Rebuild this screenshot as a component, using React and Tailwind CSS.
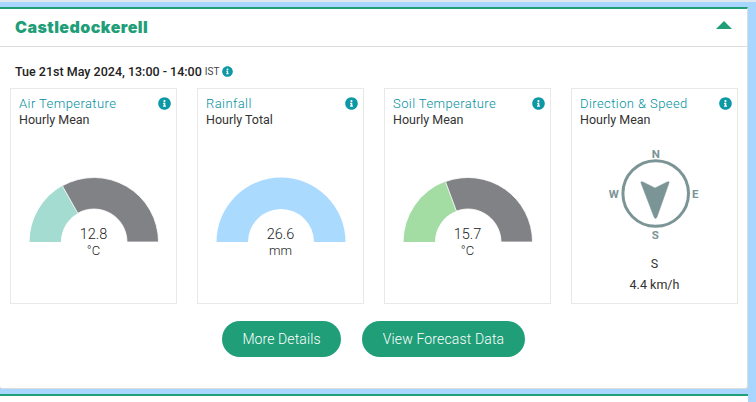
import React from 'react';
import { FaInfoCircle } from 'react-icons/fa';

const stations = [
    { title: 'Air Temperature', sub: 'Hourly Mean', value: '12.8', unit: '°C', angle: 60.6, fill: '#a5dcd2' },
    { title: 'Rainfall', sub: 'Hourly Total', value: '26.6', unit: 'mm', angle: 180, fill: '#abdaff' },
    { title: 'Soil Temperature', sub: 'Hourly Mean', value: '15.7', unit: '°C', angle: 69.5, fill: '#a3dda3' },
];

const Gauge = ({ value, unit, angle, fill }) => {
    const cx = 70;
    const cy = 68;
    const outer = 64.5;
    const inner = 33;
    const rad = (angle * Math.PI) / 180;
    const ox = cx - outer * Math.cos(rad);
    const oy = cy - outer * Math.sin(rad);
    const ix = cx - inner * Math.cos(rad);
    const iy = cy - inner * Math.sin(rad);
    const colored = `M${cx - outer} ${cy} A${outer} ${outer} 0 0 1 ${ox} ${oy} L${ix} ${iy} A${inner} ${inner} 0 0 0 ${cx - inner} ${cy} Z`;
    const rest = `M${ox} ${oy} A${outer} ${outer} 0 0 1 ${cx + outer} ${cy} L${cx + inner} ${cy} A${inner} ${inner} 0 0 0 ${ix} ${iy} Z`;

    return (
        <div className="relative w-[140px] h-[100px] mx-auto mt-[46px]">
            <svg width="140" height="68" viewBox="0 0 140 68">
                <path d={colored} fill={fill} />
                {angle < 180 && <path d={rest} fill="#818285" stroke="#ffffff" strokeWidth="0.8" />}
            </svg>
            <div className="absolute left-0 right-0 top-[52px] text-center font-light text-[#222222]">
                <div className="text-[14.5px] leading-[17px]">{value}</div>
                <div className="text-[13px] leading-[15px]">{unit}</div>
            </div>
        </div>
    );
};

const Compass = () => (
    <svg width="100" height="110" viewBox="0 0 100 110" className="mx-auto mt-[11px]">
        <circle cx="50.7" cy="54.5" r="32.8" fill="none" stroke="#7b9496" strokeWidth="3" />
        <path
            d="M36 44 Q35 42 38 43 L50 49 L62 43 Q65 42 64 44 L52 78 Q50.5 81 49 78 Z"
            fill="#7b9496"
            stroke="#7b9496"
            strokeWidth="0.5"
            strokeLinejoin="round"
        />
        <g fill="#7b9496" fontSize="11.5" fontWeight="700" textAnchor="middle" fontFamily="Roboto, sans-serif">
            <text x="50.7" y="18.5">N</text>
            <text x="90.2" y="58.5">E</text>
            <text x="50.2" y="99.5">S</text>
            <text x="8.9" y="58.5">W</text>
        </g>
    </svg>
);

const PanelHead = ({ title, sub }) => (
    <div className="flex justify-between">
        <div>
            <div className="text-[13px] leading-[16px] tracking-[0.42px] font-light text-[#00909e]">{title}</div>
            <div className="text-[12.5px] leading-[16px] text-[#333333]">{sub}</div>
        </div>
        <FaInfoCircle className="text-[13px] text-[#0d98a6] mr-[-3px] mt-[1px]" />
    </div>
);

const App = () => {
    return (
        <div className="w-[756px] h-[402px] overflow-hidden bg-[#a9d6fe] font-['Roboto',sans-serif]">
            <div className="h-[2px] bg-[#dfe8ef]"></div>
            <div className="w-[748px] mt-[5px] h-[382px] bg-white border-t-2 border-t-[#1f9e78] border-r border-b border-r-[#dddddd] border-b-[#dddddd] rounded-b-[3px]">
                <div className="h-[38px] flex items-center justify-between pl-[15px] pr-[15px] border-b border-[#dddddd]">
                    <h2 className="font-['Inter',sans-serif] text-[16px] leading-[20px] mt-[-2px] font-black tracking-[0.45px] text-[#1f9e78]">Castledockerell</h2>
                    <svg width="16" height="8" viewBox="0 0 16 8" className="mt-[-6px]">
                        <polygon points="8,0 16,8 0,8" fill="#1f9e78" />
                    </svg>
                </div>

                <div className="pl-[15px] pt-[16px] h-[41px] text-[12.5px] leading-[16px] font-medium text-[#222222] flex items-center gap-[3px] pb-[8px]">
                    <span>Tue 21st May 2024, 13:00 - 14:00</span>
                    <span className="text-[10px] font-normal text-[#444444]">IST</span>
                    <FaInfoCircle className="text-[11px] text-[#0d98a6]" />
                </div>

                <div className="flex gap-[20px] pl-[10px]">
                    {stations.map((s) => (
                        <div key={s.title} className="w-[167px] h-[216px] border border-[#e8e8e8] pt-[7px] px-[8px]">
                            <PanelHead title={s.title} sub={s.sub} />
                            <Gauge value={s.value} unit={s.unit} angle={s.angle} fill={s.fill} />
                        </div>
                    ))}
                    <div className="w-[167px] h-[216px] border border-[#e8e8e8] pt-[7px] px-[8px]">
                        <PanelHead title="Direction & Speed" sub="Hourly Mean" />
                        <Compass />
                        <div className="text-center text-[12.5px] leading-[21px] text-[#333333] mt-[4px]">
                            <div>S</div>
                            <div>4.4 km/h</div>
                        </div>
                    </div>
                </div>

                <div className="flex gap-[21px] mt-[17px] pl-[222px]">
                    <button className="w-[119px] h-[36px] rounded-full bg-[#1f9e78] text-white text-[14px] font-light tracking-[0.1px]">More Details</button>
                    <button className="w-[163px] h-[36px] rounded-full bg-[#1f9e78] text-white text-[14px] font-light tracking-[0.15px]">View Forecast Data</button>
                </div>
            </div>
            <div className="w-[748px] mt-[5px] h-[10px] bg-white border-t-2 border-t-[#1f9e78]"></div>
        </div>
    );
};

export default App;
